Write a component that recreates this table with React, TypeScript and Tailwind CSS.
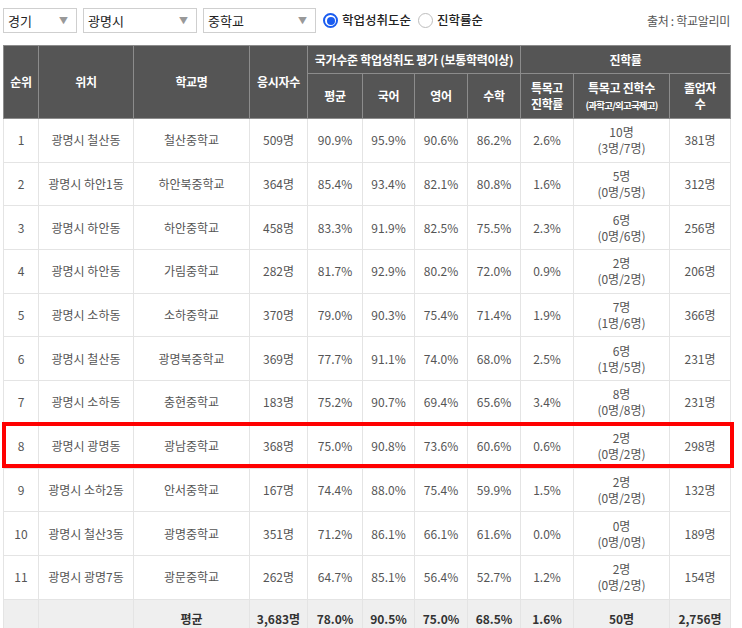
import React from "react";

const rows = [
  ["1", "광명시 철산동", "철산중학교", "509명", "90.9%", "95.9%", "90.6%", "86.2%", "2.6%", "10명", "(3명/7명)", "381명"],
  ["2", "광명시 하안1동", "하안북중학교", "364명", "85.4%", "93.4%", "82.1%", "80.8%", "1.6%", "5명", "(0명/5명)", "312명"],
  ["3", "광명시 하안동", "하안중학교", "458명", "83.3%", "91.9%", "82.5%", "75.5%", "2.3%", "6명", "(0명/6명)", "256명"],
  ["4", "광명시 하안동", "가림중학교", "282명", "81.7%", "92.9%", "80.2%", "72.0%", "0.9%", "2명", "(0명/2명)", "206명"],
  ["5", "광명시 소하동", "소하중학교", "370명", "79.0%", "90.3%", "75.4%", "71.4%", "1.9%", "7명", "(1명/6명)", "366명"],
  ["6", "광명시 철산동", "광명북중학교", "369명", "77.7%", "91.1%", "74.0%", "68.0%", "2.5%", "6명", "(1명/5명)", "231명"],
  ["7", "광명시 소하동", "충현중학교", "183명", "75.2%", "90.7%", "69.4%", "65.6%", "3.4%", "8명", "(0명/8명)", "231명"],
  ["8", "광명시 광명동", "광남중학교", "368명", "75.0%", "90.8%", "73.6%", "60.6%", "0.6%", "2명", "(0명/2명)", "298명"],
  ["9", "광명시 소하2동", "안서중학교", "167명", "74.4%", "88.0%", "75.4%", "59.9%", "1.5%", "2명", "(0명/2명)", "132명"],
  ["10", "광명시 철산3동", "광명중학교", "351명", "71.2%", "86.1%", "66.1%", "61.6%", "0.0%", "0명", "(0명/0명)", "189명"],
  ["11", "광명시 광명7동", "광문중학교", "262명", "64.7%", "85.1%", "56.4%", "52.7%", "1.2%", "2명", "(0명/2명)", "154명"],
];

const footer = ["", "", "평균", "3,683명", "78.0%", "90.5%", "75.0%", "68.5%", "1.6%", "50명", "2,756명"];

const widths = [35, 95, 116, 58, 55, 52, 53, 53, 53, 96, 61];

function Select({ label, width }: { label: string; width: string }) {
  return (
    <div
      className={`${width} h-[25px] border border-[#cfcfcf] bg-white flex items-center justify-between pl-[4px] pr-[8px] text-[13px] text-[#222]`}
    >
      <span>{label}</span>
      <span className="text-[9px] text-[#999]">▼</span>
    </div>
  );
}

const th = "border border-[#8c8c8c] text-white font-bold text-[12px] tracking-[-0.3px] align-middle text-center";
const td = "border border-[#e4e4e4] text-[#555] text-[12px] text-center align-middle";

export default function App() {
  return (
    <div
      className="w-[742px] h-[628px] overflow-hidden bg-white pl-[3px] pt-[8px]"
      style={{ fontFamily: '"Noto Sans CJK KR", "Noto Sans", sans-serif' }}
    >
      {/* filters */}
      <div className="flex items-center h-[25px] w-[727px]">
        <Select label="경기" width="w-[74px]" />
        <div className="w-[6px]" />
        <Select label="광명시" width="w-[114px]" />
        <div className="w-[6px]" />
        <Select label="중학교" width="w-[113px]" />
        <label className="flex items-center ml-[7px] text-[12.5px] font-medium text-[#222]">
          <span className="w-[15px] h-[15px] rounded-full border-[2px] border-[#1a5cf0] flex items-center justify-center mr-[4px]">
            <span className="w-[8px] h-[8px] rounded-full bg-[#1a5cf0]" />
          </span>
          학업성취도순
        </label>
        <label className="flex items-center ml-[7px] text-[12.5px] font-medium text-[#222]">
          <span className="w-[15px] h-[15px] rounded-full border border-[#bdbdbd] bg-white mr-[4px]" />
          진학률순
        </label>
        <span className="ml-auto text-[12px] text-[#555] tracking-[-0.3px]">출처 : 학교알리미</span>
      </div>

      {/* table */}
      <div className="relative mt-[12px] w-[727px]">
        <table className="table-fixed border-collapse w-[727px]">
          <colgroup>
            {widths.map((w, i) => (
              <col key={i} style={{ width: w }} />
            ))}
          </colgroup>
          <thead className="bg-[#555555]">
            <tr className="h-[28px]">
              <th rowSpan={2} className={th}>순위</th>
              <th rowSpan={2} className={th}>위치</th>
              <th rowSpan={2} className={th}>학교명</th>
              <th rowSpan={2} className={th}>응시자수</th>
              <th colSpan={4} className={th}>국가수준 학업성취도 평가 (보통학력이상)</th>
              <th colSpan={3} className={th}>진학률</th>
            </tr>
            <tr className="h-[45px]">
              <th className={th}>평균</th>
              <th className={th}>국어</th>
              <th className={th}>영어</th>
              <th className={th}>수학</th>
              <th className={`${th} leading-[16px]`}>
                특목고
                <br />
                진학률
              </th>
              <th className={`${th} leading-[16px]`}>
                특목고 진학수
                <br />
                <span className="text-[9.5px] tracking-[-0.8px]">(과학고/외고국제고)</span>
              </th>
              <th className={`${th} leading-[16px]`}>
                졸업자
                <br />수
              </th>
            </tr>
          </thead>
          <tbody>
            {rows.map((r) => (
              <tr key={r[0]} className="h-[43.7px]">
                {r.slice(0, 9).map((c, i) => (
                  <td key={i} className={td}>
                    {c}
                  </td>
                ))}
                <td className={`${td} leading-[16px]`}>
                  {r[9]}
                  <br />
                  {r[10]}
                </td>
                <td className={td}>{r[11]}</td>
              </tr>
            ))}
            <tr className="h-[40px] bg-[#efefef]">
              {footer.map((c, i) => (
                <td key={i} className="border border-[#e4e4e4] text-[#333] font-bold text-[12px] text-center align-middle">
                  {c}
                </td>
              ))}
            </tr>
          </tbody>
        </table>
        {/* highlight on row 8 */}
        <div className="absolute left-[-1px] top-[377px] w-[732px] h-[46px] border-[4px] border-[#ff0000] pointer-events-none" />
      </div>
    </div>
  );
}
